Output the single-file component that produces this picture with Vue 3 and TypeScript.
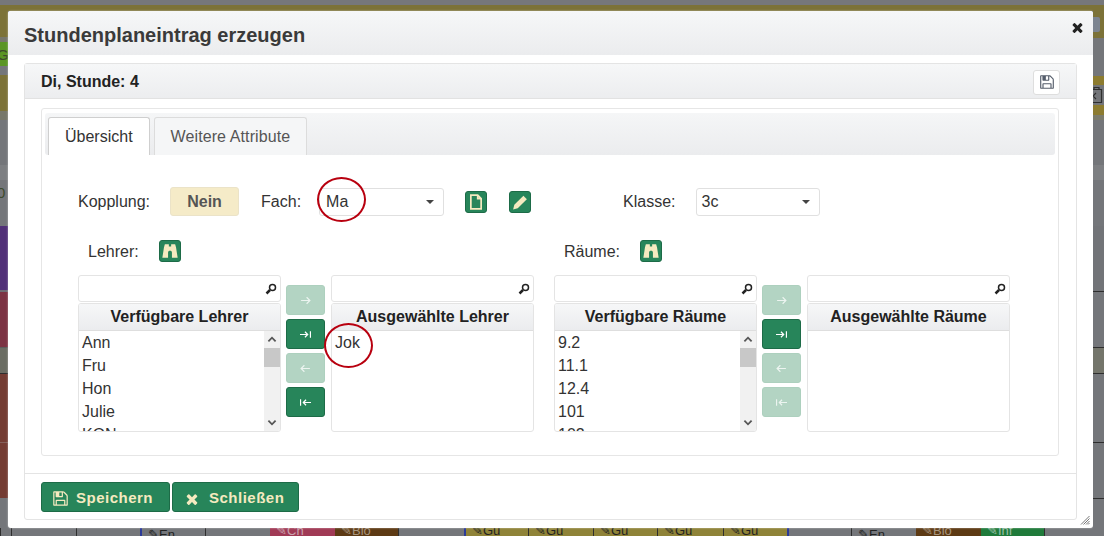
<script setup lang="ts">
interface Stripe { h: number; c: string; label?: string; icon?: boolean; btn?: boolean }
interface Cell { w: number; cls: string; text?: string }
interface DualList { title: string; items: string[]; scroll: boolean }
interface Group { label: string; lists: [DualList, DualList]; enabled: boolean[] }

const ol = '#7c7238'
const gr = '#74767a'
const leftStripes: Stripe[] = [
  { h: 26, c: ol }, { h: 5, c: '#77776c' }, { h: 24, c: '#5a9524', label: 'G' }, { h: 9, c: gr },
  { h: 36, c: ol }, { h: 9, c: '#77776a' }, { h: 45, c: gr }, { h: 15, c: '#7d7f82' },
  { h: 46, c: gr, label: '0' }, { h: 64, c: '#513078' }, { h: 2, c: '#6d6d75' }, { h: 55, c: '#7c3343' },
  { h: 1, c: '#5c5c5c' }, { h: 25, c: '#6b6d63' }, { h: 1, c: '#2e2e2e' }, { h: 68, c: '#743c33' },
  { h: 1, c: '#85605a' }, { h: 55, c: '#743c33' }, { h: 30, c: gr }
]
const rightStripes: Stripe[] = [
  { h: 27, c: ol, btn: true }, { h: 38, c: gr }, { h: 9, c: '#8d7c30' }, { h: 20, c: gr, icon: true },
  { h: 10, c: '#8d7c30' }, { h: 5, c: '#7c7c6c' }, { h: 45, c: gr }, { h: 15, c: '#7d7f82' },
  { h: 46, c: gr }, { h: 65, c: '#727478' }, { h: 1, c: '#2e2e2e' }, { h: 55, c: gr }, { h: 1, c: '#2e2e2e' },
  { h: 25, c: '#74756b' }, { h: 1, c: '#2e2e2e' }, { h: 68, c: gr }, { h: 1, c: '#2e2e2e' }, { h: 55, c: gr },
  { h: 1, c: '#2e2e2e' }, { h: 29, c: gr }
]
const cells: Cell[] = [
  { w: 11, cls: 'c-grey' }, { w: 65, cls: 'c-grey' }, { w: 64, cls: 'c-grey' },
  { w: 65, cls: 'c-grey c-blue', text: '✎En' }, { w: 65, cls: 'c-grey' },
  { w: 65, cls: 'c-red', text: '✎Ch' }, { w: 63, cls: 'c-brown', text: '✎Bio' }, { w: 66, cls: 'c-grey' },
  { w: 64, cls: 'c-olive c-blue', text: '✎Gü' }, { w: 65, cls: 'c-olive', text: '✎Gü' }, { w: 64, cls: 'c-olive', text: '✎Gü' },
  { w: 66, cls: 'c-olive', text: '✎Gü' }, { w: 64, cls: 'c-olive', text: '✎Gü' }, { w: 64, cls: 'c-grey c-blue' },
  { w: 65, cls: 'c-grey c-line', text: '✎En' }, { w: 65, cls: 'c-brown', text: '✎Bio' }, { w: 63, cls: 'c-green', text: '✎Inf' }, { w: 60, cls: 'c-grey' }
]
const groups: Group[] = [
  {
    label: 'Lehrer:',
    lists: [
      { title: 'Verfügbare Lehrer', items: ['Ann', 'Fru', 'Hon', 'Julie', 'KON'], scroll: true },
      { title: 'Ausgewählte Lehrer', items: ['Jok'], scroll: false }
    ],
    enabled: [false, true, false, true]
  },
  {
    label: 'Räume:',
    lists: [
      { title: 'Verfügbare Räume', items: ['9.2', '11.1', '12.4', '101', '102'], scroll: true },
      { title: 'Ausgewählte Räume', items: [], scroll: false }
    ],
    enabled: [false, true, false, false]
  }
]
const arrows = ['M1 5h8M6 2l3 3-3 3', 'M0 5h7M4.500 2.500 7 5 4.500 7.500M9.500 2v6', 'M9 5H1M4 2 1 5l3 3', 'M10 5H3M5.500 2.500 3 5l2.500 2.500M.500 2v6']
const save = 'M512 1536h768v-384h-768v384zm896 0h128v-896q0-14-10-38.500t-20-34.500l-281-281q-10-10-34-20t-39-10v416q0 40-28 68t-68 28h-576q-40 0-68-28t-28-68v-416h-128v1280h128v-416q0-40 28-68t68-28h832q40 0 68 28t28 68v416zm-384-928v-320q0-13-9.500-22.500t-22.500-9.500h-192q-13 0-22.500 9.500t-9.500 22.500v320q0 13 9.500 22.500t22.500 9.500h192q13 0 22.500-9.500t9.500-22.500zm640 32v928q0 40-28 68t-68 28h-1344q-40 0-68-28t-28-68v-1344q0-40 28-68t68-28h928q40 0 88 20t76 48l280 280q28 28 48 76t20 88z'
const times = 'M1490 1322q0 40-28 68l-136 136q-28 28-68 28t-68-28l-294-294-294 294q-28 28-68 28t-68-28l-136-136q-28-28-28-68t28-68l294-294-294-294q-28-28-28-68t28-68l136-136q28-28 68-28t68 28l294 294 294-294q28-28 68-28t68 28l136 136q28 28 28 68t-28 68l-294 294 294 294q28 28 28 68z'
const binoculars = 'M2.500 1H6v2h2V1h3.500l.8 3 1.400 9H8.700V8.500C8.700 7.200 8 6.700 7 6.700S5.300 7.200 5.300 8.500V13H.3l1.400-9z'
</script>

<template>
  <div class="page">
    <div class="top-strip"></div>

    <div class="side">
      <div v-for="(s, i) in leftStripes" :key="i" class="stripe" :style="{ height: s.h + 'px', background: s.c }">
        <span v-if="s.label" class="stripe-label">{{ s.label }}</span>
      </div>
    </div>

    <section class="dialog">
      <header class="dialog-title">
        <h1>Stundenplaneintrag erzeugen</h1>
        <svg class="close" viewBox="0 0 1792 1792"><path :d="times" /></svg>
      </header>

      <div class="dialog-body">
        <div class="panel">
          <div class="panel-head">
            <strong>Di, Stunde: 4</strong>
            <button class="save-top" type="button">
              <svg viewBox="0 0 1792 1792"><path :d="save" /></svg>
            </button>
          </div>

          <div class="panel-body">
            <div class="inner">
              <div class="tabs">
                <div class="tab active">Übersicht</div>
                <div class="tab other">Weitere Attribute</div>
              </div>

              <div class="tab-content">
                <div class="row-one">
                  <span class="lbl">Kopplung:</span>
                  <span class="nein">Nein</span>
                  <span class="lbl fach">Fach:</span>
                  <div class="select fach-select"><span>Ma</span><i class="caret"></i></div>
                  <span class="icon-btn doc">
                    <svg viewBox="0 0 14 14"><path d="M2.500 1h6l3 3v9h-9zM8.500 1v3h3" /></svg>
                  </span>
                  <span class="icon-btn pen">
                    <svg viewBox="0 0 14 14"><path class="solid" d="M10 1.500 13 4.500 5 12.500 1 13.500l1-4z" /></svg>
                  </span>
                  <span class="lbl klasse">Klasse:</span>
                  <div class="select klasse-select"><span>3c</span><i class="caret"></i></div>
                </div>

                <div class="groups">
                  <div v-for="g in groups" :key="g.label" class="group">
                    <div class="group-label">
                      <span class="lbl">{{ g.label }}</span>
                      <span class="icon-btn binoc">
                        <svg viewBox="0 0 14 14"><path class="solid" :d="binoculars" /></svg>
                      </span>
                    </div>
                    <div class="dual">
                      <div class="list-col">
                        <div class="search">
                          <svg viewBox="0 0 12 12"><circle cx="7.500" cy="4.500" r="3" /><path d="M5 7 1.500 10.500" class="handle" /></svg>
                        </div>
                        <div class="list">
                          <div class="list-head">{{ g.lists[0].title }}</div>
                          <div class="list-body">
                            <div class="items"><div v-for="it in g.lists[0].items" :key="it">{{ it }}</div></div>
                            <div v-if="g.lists[0].scroll" class="scrollbar">
                              <svg viewBox="0 0 10 10"><path d="M2 6.500 5 3.500l3 3" /></svg>
                              <div class="thumb"></div>
                              <svg class="down" viewBox="0 0 10 10"><path d="M2 3.500 5 6.500l3-3" /></svg>
                            </div>
                          </div>
                        </div>
                      </div>

                      <div class="moves">
                        <button v-for="(a, i) in arrows" :key="i" type="button" class="move" :class="{ off: !g.enabled[i] }">
                          <svg viewBox="0 0 10 10"><path :d="a" /></svg>
                        </button>
                      </div>

                      <div class="list-col">
                        <div class="search">
                          <svg viewBox="0 0 12 12"><circle cx="7.500" cy="4.500" r="3" /><path d="M5 7 1.500 10.500" class="handle" /></svg>
                        </div>
                        <div class="list">
                          <div class="list-head">{{ g.lists[1].title }}</div>
                          <div class="list-body">
                            <div class="items"><div v-for="it in g.lists[1].items" :key="it" class="sel">{{ it }}</div></div>
                          </div>
                        </div>
                      </div>
                    </div>
                  </div>
                </div>
              </div>
            </div>
          </div>

          <footer class="panel-foot">
            <button type="button" class="action save-btn">
              <svg viewBox="0 0 1792 1792"><path :d="save" /></svg>Speichern
            </button>
            <button type="button" class="action close-btn">
              <svg viewBox="0 0 1792 1792"><path :d="times" /></svg>Schließen
            </button>
          </footer>
        </div>
      </div>

      <i class="ring ring-fach"></i>
      <i class="ring ring-jok"></i>
      <svg class="grip" viewBox="0 0 10 10"><path d="M9.500 1 1 9.500M9.500 3.500 3.500 9.500M9.500 6 6 9.500M9.500 8 8 9.500" /></svg>
    </section>

    <div class="side">
      <div v-for="(s, i) in rightStripes" :key="i" class="stripe" :style="{ height: s.h + 'px', background: s.c }">
        <span v-if="s.btn" class="stripe-btn"></span>
        <svg v-if="s.icon" class="clip" viewBox="0 0 12 20"><path d="M.5 4.500h10v13H.5zM3 4.500V2.500h5v2M2 11l3-3M2 11l3 3" /></svg>
      </div>
    </div>

    <div class="bottom">
      <div v-for="(c, i) in cells" :key="i" class="cell" :class="c.cls" :style="{ width: c.w + 'px' }">{{ c.text }}</div>
    </div>
  </div>
</template>

<style scoped>
.page {
  width: 1104px;
  height: 536px;
  overflow: hidden;
  display: grid;
  grid-template-columns: 8px 1085px 11px;
  grid-template-rows: 11px 517px 8px;
  background: #74767a;
  font-family: "Liberation Sans", Arial, sans-serif;
  color: #333;
}
.top-strip {
  grid-column: 1 / 4;
  background: linear-gradient(to bottom, #76777b 0 5px, #7c7238 5px);
}
.side { overflow: hidden; display: flex; flex-direction: column; }
.stripe { flex: none; position: relative; overflow: hidden; }
.stripe-label { display: block; margin: 4px 0 0 -3px; font-size: 15px; color: #3d4a2c; }
.stripe-btn { position: absolute; left: -6px; top: 6px; width: 13px; height: 15px; background: #7c8490; border-radius: 2px; }
.clip { display: block; margin: 0 0 0 -2px; width: 12px; height: 20px; fill: none; stroke: #2f2f2f; stroke-width: 1.200; }

.dialog {
  position: relative;
  background: #fff;
  border-radius: 3px;
  box-shadow: 0 0 2px rgba(255, 255, 255, .6);
  display: flex;
  flex-direction: column;
}
.dialog-title {
  height: 44px;
  flex: none;
  display: flex;
  justify-content: space-between;
  padding: 0 8px 0 16px;
  background: linear-gradient(to bottom, #f6f7f8, #ebecee);
  border-radius: 3px 3px 0 0;
}
h1 { margin: 0; font-size: 20px; line-height: 49px; font-weight: 700; color: #3a3a3a; }
.close { width: 15px; height: 15px; margin: 9px 0 0; fill: #222; }

.dialog-body { flex: 1; padding: 8px 16px 8px 16px; display: flex; min-height: 0; }
.panel {
  flex: 1;
  border: 1.500px solid #e4e4e4;
  border-radius: 3px;
  display: flex;
  flex-direction: column;
  min-width: 0;
}
.panel-head {
  height: 35px;
  box-sizing: border-box;
  flex: none;
  padding: 0 16px;
  display: flex;
  align-items: center;
  justify-content: space-between;
  background: linear-gradient(to bottom, #f6f7f8, #ecedef);
  border-bottom: 1.500px solid #e2e2e2;
  font-size: 16px;
  color: #222;
}
.panel-head strong { padding-top: 2px; }
.save-top {
  width: 27px; height: 25px; padding: 0; margin-top: 2px;
  background: #fff; border: 1px solid #dedede; border-radius: 3px;
  display: flex; align-items: center; justify-content: center;
}
.save-top svg { width: 16px; height: 16px; fill: #555d6b; }

.panel-body { height: 374px; box-sizing: border-box; flex: none; padding: 9px 17px 0 16px; }
.inner {
  height: 348px;
  box-sizing: border-box;
  border: 1.500px solid #e6e6e6;
  border-radius: 3px;
  padding: 4px 3px;
  display: flex;
  flex-direction: column;
}
.tabs {
  height: 42px;
  flex: none;
  display: flex;
  align-items: flex-end;
  gap: 4px;
  padding-left: 3px;
  background: linear-gradient(to bottom, #f5f6f7, #ebecee);
  border-radius: 3px;
}
.tab {
  height: 38px;
  box-sizing: border-box;
  padding: 0 16px;
  display: flex;
  align-items: center;
  font-size: 16px;
  color: #555;
  background: #f5f6f7;
  border: 1.500px solid #dcdcdc;
  border-bottom: 0;
  border-radius: 3px 3px 0 0;
}
.tab.active { background: #fff; color: #333; border-color: #cfcfcf; }
.tab.other { letter-spacing: .1px; }

.tab-content { padding: 32px 0 0 33px; }
.lbl { font-size: 16px; color: #333; line-height: 22px; }
.row-one { display: flex; align-items: center; height: 29px; }
.nein {
  margin-left: 20px; width: 69px; height: 29px; box-sizing: border-box;
  display: flex; align-items: center; justify-content: center;
  background: #f5ebc8; border: 1px solid #ebe3c8; border-radius: 3px;
  font-size: 16px; font-weight: 700; color: #555;
}
.fach { margin-left: 22px; }
.select {
  height: 28px; box-sizing: border-box;
  border: 1px solid #e0e0e0; border-radius: 3px; background: #fff;
  display: flex; align-items: center; justify-content: space-between;
  font-size: 16px; color: #333; padding: 0 9px 0 6px;
}
.fach-select { margin-left: 18px; width: 125px; }
.klasse-select { margin-left: 20px; width: 124px; padding-left: 5px; }
.caret { width: 0; height: 0; border: 4px solid transparent; border-top: 4.500px solid #444; border-bottom: 0; }

.icon-btn {
  flex: none; width: 22px; height: 22px; box-sizing: border-box;
  background: #27855a; border: 1px solid #1d6b47; border-radius: 3px;
  display: flex; align-items: center; justify-content: center;
}
.icon-btn svg { width: 16px; height: 16px; fill: none; stroke: #f5eac0; stroke-width: 1.500; }
.icon-btn svg .solid { fill: #f5eac0; stroke: none; }
.doc { margin-left: 21px; }
.pen { margin-left: 22px; }
.klasse { margin-left: 92px; }

.groups { display: grid; grid-template-columns: 456px 456px; column-gap: 20px; margin-top: 24px; }
.group-label { display: flex; align-items: center; height: 22px; padding-left: 10px; gap: 20px; }
.group-label .lbl { padding-top: 2px; }
.dual { display: flex; gap: 5px; margin-top: 13px; }
.list-col { width: 203px; flex: none; }
.search {
  height: 27px; box-sizing: border-box;
  border: 1.500px solid #e4e4e4; border-radius: 3px; background: #fff;
  display: flex; align-items: center; justify-content: flex-end; padding-right: 3px;
}
.search svg { width: 12px; height: 12px; fill: none; stroke: #222; stroke-width: 1.500; }
.search .handle { stroke-width: 2.500; }
.list {
  margin-top: 1px; height: 129px; box-sizing: border-box;
  border: 1.500px solid #e4e4e4; border-radius: 3px;
  display: flex; flex-direction: column; overflow: hidden;
}
.list-head {
  height: 27px; flex: none; box-sizing: border-box;
  background: linear-gradient(to bottom, #f6f7f8, #ebecee);
  border-bottom: 1px solid #dedede;
  text-align: center; font-size: 16px; font-weight: 700; line-height: 25px; color: #222;
}
.list-body { flex: 1; display: flex; min-height: 0; overflow: hidden; }
.items { flex: 1; padding: 0 0 0 3px; font-size: 16px; line-height: 23px; color: #333; }
.scrollbar { width: 16px; flex: none; background: #f1f1f1; display: flex; flex-direction: column; align-items: center; }
.scrollbar svg { width: 12px; height: 17px; flex: none; fill: none; stroke: #555; stroke-width: 1.500; }
.scrollbar .down { margin-top: auto; }
.thumb { width: 16px; height: 19px; background: #c8c8c8; }

.moves { width: 39px; flex: none; margin-right: 1px; padding-top: 10px; display: flex; flex-direction: column; gap: 4px; }
.move {
  height: 30px; padding: 0; box-sizing: border-box;
  background: #27855a; border: 1px solid #1d6b47; border-radius: 3px;
  display: flex; align-items: center; justify-content: center;
}
.move svg { width: 11px; height: 11px; fill: none; stroke: #fff; stroke-width: 1.100; }
.move.off { background: #b3d4c3; border-color: #add0be; }
.move.off svg { opacity: .75; }

.panel-foot {
  flex: 1;
  border-top: 1.500px solid #e4e4e4;
  padding: 8px 16px 0;
  display: flex;
  gap: 2px;
  align-items: flex-start;
}
.action {
  height: 30px; box-sizing: border-box;
  background: #27855a; border: 1px solid #1d6b47; border-radius: 3px;
  display: flex; align-items: center;
  color: #f5eac0; font: 700 15px "Liberation Sans", Arial, sans-serif; letter-spacing: .5px;
}
.action svg { flex: none; fill: #f5eac0; margin-top: 2px; }
.save-btn { width: 129px; padding: 0 0 0 10px; gap: 7px; }
.save-btn svg { width: 17px; height: 17px; }
.close-btn { width: 127px; padding: 0 0 0 11px; gap: 9px; }
.close-btn svg { width: 16px; height: 16px; margin-top: 3px; }

.ring { position: absolute; box-sizing: border-box; width: 49px; height: 45px; border: 2px solid #b8000f; border-radius: 50%; }
.ring-fach { left: 309px; top: 166px; }
.ring-jok { left: 316px; top: 312px; }
.grip { position: absolute; right: 3px; bottom: 3px; width: 10px; height: 10px; fill: none; stroke: #777; stroke-width: 1; }

.bottom { grid-column: 1 / 4; display: flex; overflow: hidden; }
.cell {
  flex: none; height: 8px; box-sizing: border-box; overflow: hidden;
  border-left: 1px solid #2e2e2e;
  padding-left: 6px; font-size: 13px; line-height: 13px; white-space: nowrap;
}
.c-grey { background: #74767a; color: #222; }
.c-line { border-left-color: #2e2e2e; }
.c-blue { border-left: 2px solid #2b3a98; }
.c-red { background: #a03a55; color: #c9a2ae; border-left: 0; line-height: 5px; }
.c-brown { background: #5d3a14; color: #a6957f; border-left: 0; line-height: 5px; }
.c-olive { background: #8f8338; color: #222; text-decoration: underline; line-height: 6px; }
.c-green { background: #1f7a3a; color: #9cc0a8; border-left: 0; line-height: 5px; }
</style>
